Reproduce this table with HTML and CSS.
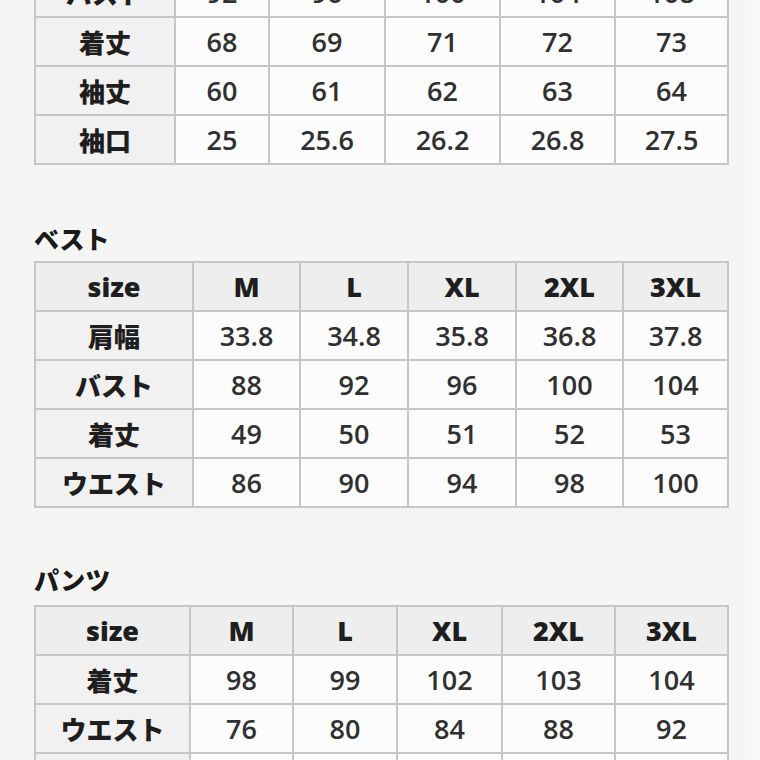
FILE: index.html
```html
<!DOCTYPE html>
<html lang="ja">
<head>
<meta charset="utf-8">
<title>サイズ表</title>
<link rel="stylesheet" href="styles.css">
</head>
<body>
<div class="page">
  <section class="sec sec-top">
    <div class="grid grid-top">
      <div class="cell label">バスト</div><div class="cell">92</div><div class="cell">96</div><div class="cell">100</div><div class="cell">104</div><div class="cell">108</div>
      <div class="cell label">着丈</div><div class="cell">68</div><div class="cell">69</div><div class="cell">71</div><div class="cell">72</div><div class="cell">73</div>
      <div class="cell label">袖丈</div><div class="cell">60</div><div class="cell">61</div><div class="cell">62</div><div class="cell">63</div><div class="cell">64</div>
      <div class="cell label">袖口</div><div class="cell">25</div><div class="cell">25.6</div><div class="cell">26.2</div><div class="cell">26.8</div><div class="cell">27.5</div>
    </div>
  </section>

  <section class="sec sec-vest">
    <h2 class="title">ベスト</h2>
    <div class="grid grid-vest">
      <div class="cell head">size</div><div class="cell head">M</div><div class="cell head">L</div><div class="cell head">XL</div><div class="cell head">2XL</div><div class="cell head">3XL</div>
      <div class="cell label">肩幅</div><div class="cell">33.8</div><div class="cell">34.8</div><div class="cell">35.8</div><div class="cell">36.8</div><div class="cell">37.8</div>
      <div class="cell label">バスト</div><div class="cell">88</div><div class="cell">92</div><div class="cell">96</div><div class="cell">100</div><div class="cell">104</div>
      <div class="cell label">着丈</div><div class="cell">49</div><div class="cell">50</div><div class="cell">51</div><div class="cell">52</div><div class="cell">53</div>
      <div class="cell label">ウエスト</div><div class="cell">86</div><div class="cell">90</div><div class="cell">94</div><div class="cell">98</div><div class="cell">100</div>
    </div>
  </section>

  <section class="sec sec-pants">
    <h2 class="title">パンツ</h2>
    <div class="grid grid-pants">
      <div class="cell head">size</div><div class="cell head">M</div><div class="cell head">L</div><div class="cell head">XL</div><div class="cell head">2XL</div><div class="cell head">3XL</div>
      <div class="cell label">着丈</div><div class="cell">98</div><div class="cell">99</div><div class="cell">102</div><div class="cell">103</div><div class="cell">104</div>
      <div class="cell label">ウエスト</div><div class="cell">76</div><div class="cell">80</div><div class="cell">84</div><div class="cell">88</div><div class="cell">92</div>
      <div class="cell label">ヒップ</div><div class="cell">100</div><div class="cell">104</div><div class="cell">108</div><div class="cell">112</div><div class="cell">116</div>
    </div>
  </section>
</div>
</body>
</html>
```

FILE: styles.css
```css
html, body {
  margin: 0;
  padding: 0;
}
body {
  background: linear-gradient(to right, #f5f5f3 0, #f5f5f3 751px, #f9f9f7 751px);
  color: #262626;
  font-family: "Open Sans", "Noto Sans CJK JP", sans-serif;
  overflow: hidden;
  height: 760px;
}
.page {
  padding-left: 34px;
}
.sec-top {
  margin-top: -33px;
}
.sec-vest {
  margin-top: 58px;
}
.sec-pants {
  margin-top: 56px;
}
.title {
  margin: 0 0 8px 0;
  height: 30px;
  line-height: 30px;
  font-family: "Noto Sans CJK JP", sans-serif;
  font-size: 25px;
  font-weight: 900;
  color: #1a1a1a;
}
.sec-pants .title {
  margin-bottom: 11px;
}
.grid {
  display: grid;
  width: max-content;
  background: #c6c6c6;
  padding: 2px;
  gap: 2px;
  grid-auto-rows: 47px;
}
.grid-top {
  grid-template-columns: 138px 92px 114px 113px 113px 111px;
}
.grid-vest {
  grid-template-columns: 156px 105px 106px 106px 105px 103px;
}
.grid-pants {
  grid-template-columns: 153px 101px 102px 103px 111px 111px;
}
.cell {
  display: flex;
  align-items: center;
  justify-content: center;
  background: #fcfcfc;
  font-size: 27px;
  font-weight: 600;
  color: #303030;
}
.cell.label {
  background: #f1f1f1;
  font-family: "Noto Sans CJK JP", sans-serif;
  font-weight: 900;
  font-size: 26px;
  color: #1e1e1e;
}
.cell.head {
  background: #eeeeee;
  font-weight: 800;
  font-size: 27px;
  color: #1e1e1e;
}
```
